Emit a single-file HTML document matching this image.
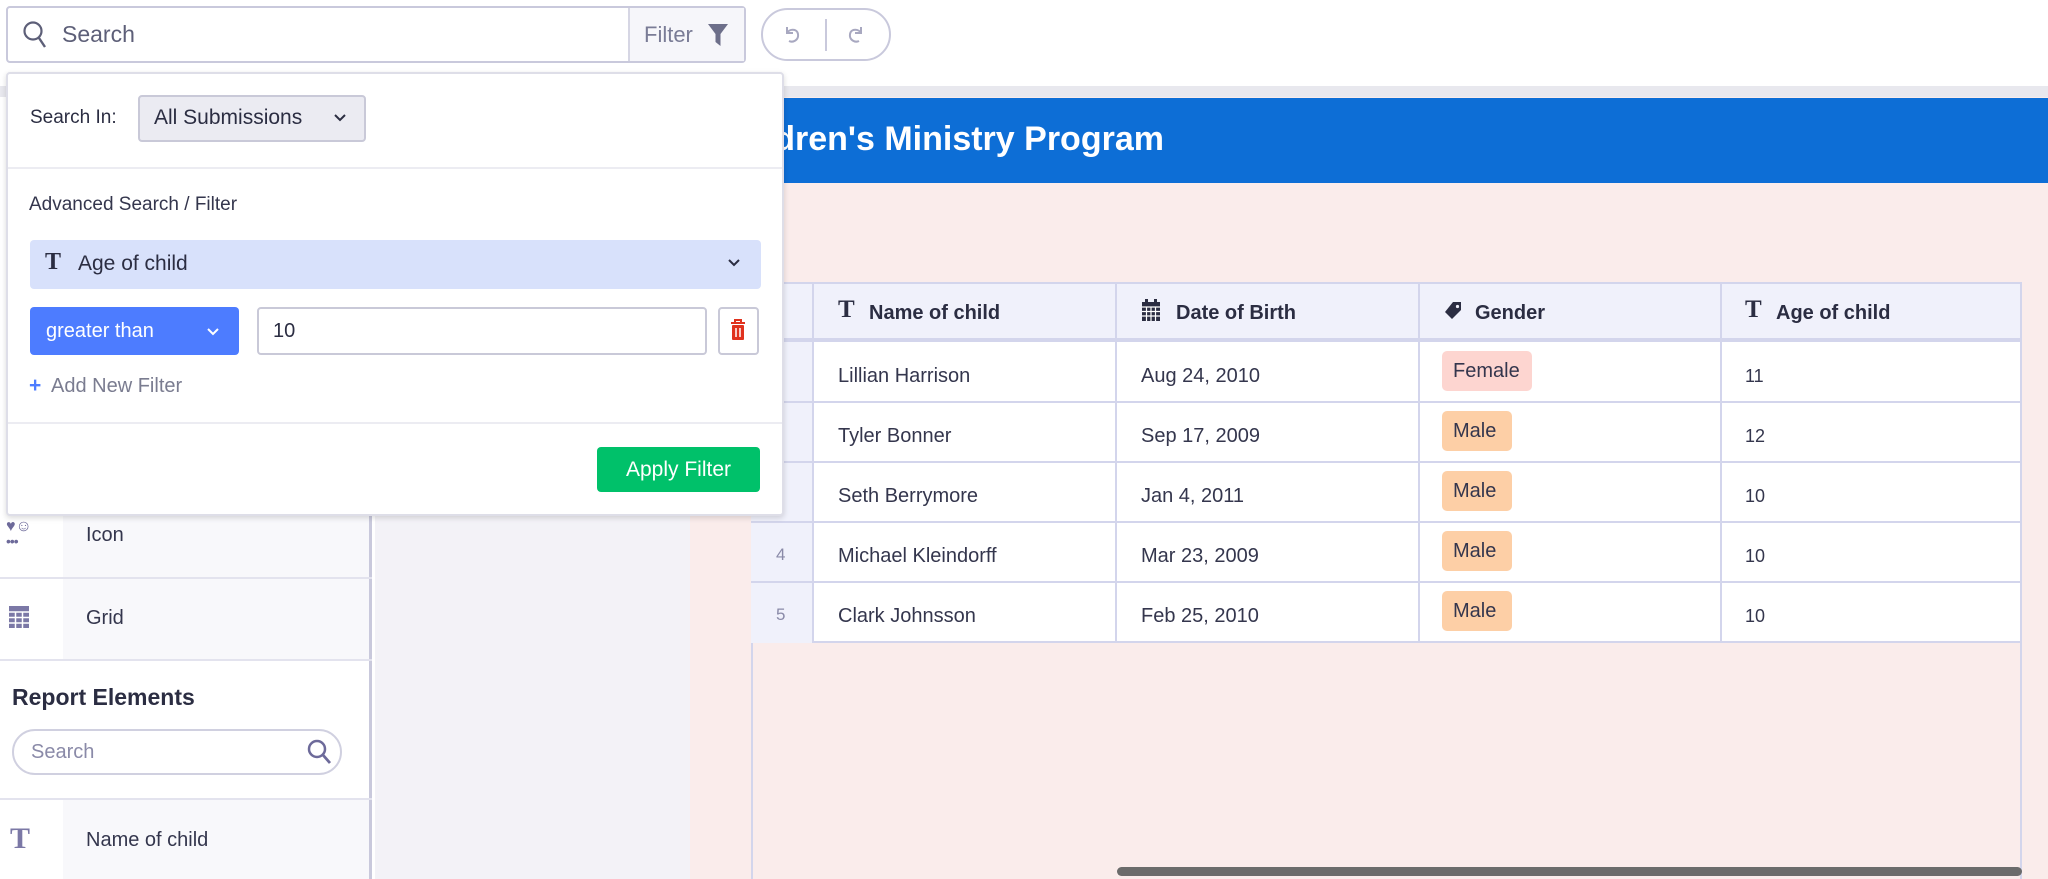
<!DOCTYPE html>
<html><head><meta charset="utf-8"><style>
*{box-sizing:border-box;margin:0;padding:0}
body{width:2048px;height:879px;overflow:hidden;position:relative;background:#fff;font-family:"Liberation Sans",sans-serif;color:#2b2d42}
.a{position:absolute}
.t{font-family:"Liberation Serif",serif;font-weight:bold}
</style></head><body>
<div class="a" style="left:0;top:0;width:2048px;height:86px;background:#fff"></div>
<div class="a" style="left:0;top:86px;width:2048px;height:11px;background:#e8e8ee"></div>
<div class="a" style="left:0;top:97px;width:372px;height:782px;background:#f8f8fb;border-right:3px solid #c9c9dc"></div>
<div class="a" style="left:0;top:97px;width:63px;height:782px;background:#fff"></div>
<div class="a" style="left:0;top:577px;width:372px;height:2px;background:#e3e3ee"></div>
<div class="a" style="left:0;top:659px;width:372px;height:2px;background:#e3e3ee"></div>
<div class="a" style="left:0;top:661px;width:369px;height:138px;background:#fff"></div>
<div class="a" style="left:0;top:798px;width:372px;height:2px;background:#e3e3ee"></div>
<div class="a" style="left:6px;top:520px;color:#6d6a9a;font-size:16px;line-height:14px">♥☺<br><span style="font-size:14px;letter-spacing:-1px">•••</span></div>
<div class="a" style="left:86px;top:524px;font-size:20px;color:#34364d">Icon</div>
<svg class="a" style="left:8px;top:605px" width="22" height="24" viewBox="0 0 22 24"><rect x="1" y="1" width="20" height="22" fill="#7b78a6"/><g stroke="#fff" stroke-width="1.5"><path d="M1 7H21M1 12.5H21M1 18H21M7.5 7V23M14.5 7V23"/></g></svg>
<div class="a" style="left:86px;top:607px;font-size:20px;color:#34364d">Grid</div>
<div class="a" style="left:12px;top:684px;font-size:23px;font-weight:bold;color:#2b2d42">Report Elements</div>
<div class="a" style="left:12px;top:729px;width:330px;height:46px;border:2px solid #d0d0e0;border-radius:23px;background:#fff"></div>
<div class="a" style="left:31px;top:741px;font-size:20px;color:#8a8aa8">Search</div>
<svg class="a" style="left:306px;top:738px" width="26" height="28" viewBox="0 0 26 28"><circle cx="11" cy="11" r="8" fill="none" stroke="#6d6a9a" stroke-width="2.5"/><path d="M17 17L24 25" stroke="#6d6a9a" stroke-width="2.8"/></svg>
<div class="a t" style="left:10px;top:822px;font-size:30px;color:#7b78a6">T</div>
<div class="a" style="left:86px;top:829px;font-size:20px;color:#34364d">Name of child</div>
<div class="a" style="left:375px;top:97px;width:315px;height:782px;background:#f3f2f7"></div>
<div class="a" style="left:690px;top:97px;width:1358px;height:782px;background:#faeceb"></div>
<div class="a" style="left:690px;top:98px;width:1358px;height:85px;background:#0d6ed6"></div>
<div class="a" style="left:710px;top:120px;font-size:34px;font-weight:bold;color:#fff;white-space:nowrap">Children's Ministry Program</div>
<div class="a" style="left:751px;top:282px;width:1271px;height:597px;border:2px solid #d3d5ec;border-bottom:none"></div>
<div class="a" style="left:751px;top:282px;width:1271px;height:361px;background:#fff;border:2px solid #d3d5ec"></div>
<div class="a" style="left:751px;top:282px;width:1271px;height:60px;background:#f0f1fb;border:2px solid #d3d5ec;border-bottom:4px solid #d3d5ec"></div>
<div class="a" style="left:751px;top:342px;width:61px;height:301px;background:#f0f1fb"></div>
<div class="a" style="left:812px;top:282px;width:2px;height:361px;background:#d3d5ec"></div>
<div class="a" style="left:1115px;top:282px;width:2px;height:361px;background:#d3d5ec"></div>
<div class="a" style="left:1418px;top:282px;width:2px;height:361px;background:#d3d5ec"></div>
<div class="a" style="left:1720px;top:282px;width:2px;height:361px;background:#d3d5ec"></div>
<div class="a" style="left:751px;top:401px;width:1271px;height:2px;background:#d3d5ec"></div>
<div class="a" style="left:751px;top:461px;width:1271px;height:2px;background:#d3d5ec"></div>
<div class="a" style="left:751px;top:521px;width:1271px;height:2px;background:#d3d5ec"></div>
<div class="a" style="left:751px;top:581px;width:1271px;height:2px;background:#d3d5ec"></div>
<div class="a t" style="left:838px;top:296px;font-size:25px;color:#2b2d42">T</div>
<div class="a" style="left:869px;top:302px;font-size:20px;font-weight:bold;color:#2b2d42">Name of child</div>
<svg class="a" style="left:1141px;top:298px" width="20" height="24" viewBox="0 0 20 24"><rect x="1" y="4" width="18" height="19" fill="#2b2d42"/><rect x="4" y="1" width="3" height="5" fill="#2b2d42"/><rect x="13" y="1" width="3" height="5" fill="#2b2d42"/><g stroke="#fff" stroke-width="1.2"><path d="M1 9H19M1 13.5H19M1 18H19M5.5 9V23M10 9V23M14.5 9V23"/></g></svg>
<div class="a" style="left:1176px;top:302px;font-size:20px;font-weight:bold;color:#2b2d42">Date of Birth</div>
<svg class="a" style="left:1443px;top:301px" width="20" height="20" viewBox="0 0 20 20"><path d="M10 1H18V9L9 18L2 11Z" fill="#2b2d42"/><circle cx="14.5" cy="5.5" r="1.6" fill="#f0f1fb"/></svg>
<div class="a" style="left:1475px;top:302px;font-size:20px;font-weight:bold;color:#2b2d42">Gender</div>
<div class="a t" style="left:1745px;top:296px;font-size:25px;color:#2b2d42">T</div>
<div class="a" style="left:1776px;top:302px;font-size:20px;font-weight:bold;color:#2b2d42">Age of child</div>
<div class="a" style="left:776px;top:545px;font-size:17px;color:#8a8aa8">4</div>
<div class="a" style="left:776px;top:605px;font-size:17px;color:#8a8aa8">5</div>
<div class="a" style="left:838px;top:364px;font-size:20px;line-height:24px;color:#34364d">Lillian Harrison</div>
<div class="a" style="left:838px;top:424px;font-size:20px;line-height:24px;color:#34364d">Tyler Bonner</div>
<div class="a" style="left:838px;top:484px;font-size:20px;line-height:24px;color:#34364d">Seth Berrymore</div>
<div class="a" style="left:838px;top:544px;font-size:20px;line-height:24px;color:#34364d">Michael Kleindorff</div>
<div class="a" style="left:838px;top:604px;font-size:20px;line-height:24px;color:#34364d">Clark Johnsson</div>
<div class="a" style="left:1141px;top:364px;font-size:20px;line-height:24px;color:#34364d">Aug 24, 2010</div>
<div class="a" style="left:1141px;top:424px;font-size:20px;line-height:24px;color:#34364d">Sep 17, 2009</div>
<div class="a" style="left:1141px;top:484px;font-size:20px;line-height:24px;color:#34364d">Jan 4, 2011</div>
<div class="a" style="left:1141px;top:544px;font-size:20px;line-height:24px;color:#34364d">Mar 23, 2009</div>
<div class="a" style="left:1141px;top:604px;font-size:20px;line-height:24px;color:#34364d">Feb 25, 2010</div>
<div class="a" style="left:1442px;top:351px;width:90px;height:40px;background:#fdd5d0;border-radius:5px;font-size:20px;line-height:40px;padding-left:11px;color:#34364d">Female</div>
<div class="a" style="left:1442px;top:411px;width:70px;height:40px;background:#fdcfa6;border-radius:5px;font-size:20px;line-height:40px;padding-left:11px;color:#34364d">Male</div>
<div class="a" style="left:1442px;top:471px;width:70px;height:40px;background:#fdcfa6;border-radius:5px;font-size:20px;line-height:40px;padding-left:11px;color:#34364d">Male</div>
<div class="a" style="left:1442px;top:531px;width:70px;height:40px;background:#fdcfa6;border-radius:5px;font-size:20px;line-height:40px;padding-left:11px;color:#34364d">Male</div>
<div class="a" style="left:1442px;top:591px;width:70px;height:40px;background:#fdcfa6;border-radius:5px;font-size:20px;line-height:40px;padding-left:11px;color:#34364d">Male</div>
<div class="a" style="left:1745px;top:364px;font-size:18px;line-height:24px;color:#34364d">11</div>
<div class="a" style="left:1745px;top:424px;font-size:18px;line-height:24px;color:#34364d">12</div>
<div class="a" style="left:1745px;top:484px;font-size:18px;line-height:24px;color:#34364d">10</div>
<div class="a" style="left:1745px;top:544px;font-size:18px;line-height:24px;color:#34364d">10</div>
<div class="a" style="left:1745px;top:604px;font-size:18px;line-height:24px;color:#34364d">10</div>
<div class="a" style="left:1117px;top:867px;width:905px;height:9px;background:#6b6b6b;border-radius:5px"></div>
<div class="a" style="left:6px;top:6px;width:740px;height:57px;border:2px solid #c9c9dc;border-radius:4px;background:#fff"></div>
<div class="a" style="left:628px;top:8px;width:116px;height:53px;background:#f6f6fa;border-left:2px solid #d6d6e4"></div>
<svg class="a" style="left:22px;top:20px" width="26" height="30" viewBox="0 0 26 30"><circle cx="11" cy="11" r="8.5" fill="none" stroke="#5d5f78" stroke-width="2.2"/><path d="M17 18L23 27" stroke="#5d5f78" stroke-width="2.4"/></svg>
<div class="a" style="left:62px;top:21px;font-size:23px;color:#5d5f78">Search</div>
<div class="a" style="left:644px;top:22px;font-size:22px;color:#7a7c96">Filter</div>
<svg class="a" style="left:708px;top:24px" width="20" height="22" viewBox="0 0 20 22"><path d="M0 0H20L12.5 10V22L7.5 18V10Z" fill="#6d6f8a"/></svg>
<div class="a" style="left:761px;top:8px;width:130px;height:53px;border:2px solid #c9c9dc;border-radius:27px;background:#fff"></div>
<div class="a" style="left:825px;top:19px;width:2px;height:32px;background:#c9c9dc"></div>
<svg class="a" style="left:782px;top:24px" width="22" height="22" viewBox="0 0 22 22"><path d="M5 3V9H11M5 9C7 5 15 4 16 10C17 16 11 19 7 17" fill="none" stroke="#a8a8c0" stroke-width="2"/></svg>
<svg class="a" style="left:844px;top:24px" width="22" height="22" viewBox="0 0 22 22"><path d="M17 3V9H11M17 9C15 5 7 4 6 10C5 16 11 19 15 17" fill="none" stroke="#a8a8c0" stroke-width="2"/></svg>
<div class="a" style="left:6px;top:72px;width:778px;height:444px;background:#fff;border:2px solid #dedee8;border-radius:4px;box-shadow:0 2px 6px rgba(0,0,0,.15)"></div>
<div class="a" style="left:30px;top:107px;font-size:19px;color:#2b2d42">Search In:</div>
<div class="a" style="left:138px;top:95px;width:228px;height:47px;background:#ebebf2;border:2px solid #c9c9d8;border-radius:4px"></div>
<div class="a" style="left:154px;top:106px;font-size:21px;color:#2b2d42">All Submissions</div>
<svg class="a" style="left:334px;top:114px" width="12" height="8" viewBox="0 0 12 8"><path d="M1 1L6 6L11 1" fill="none" stroke="#2b2d42" stroke-width="2"/></svg>
<div class="a" style="left:8px;top:167px;width:774px;height:2px;background:#ececf2"></div>
<div class="a" style="left:29px;top:194px;font-size:19px;color:#34364d">Advanced Search / Filter</div>
<div class="a" style="left:30px;top:240px;width:731px;height:49px;background:#d8e1fb;border-radius:4px"></div>
<div class="a t" style="left:45px;top:249px;font-size:24px;color:#2b2d42">T</div>
<div class="a" style="left:78px;top:252px;font-size:21px;color:#2b2d42">Age of child</div>
<svg class="a" style="left:728px;top:259px" width="12" height="8" viewBox="0 0 12 8"><path d="M1 1L6 6L11 1" fill="none" stroke="#2b2d42" stroke-width="2"/></svg>
<div class="a" style="left:30px;top:307px;width:209px;height:48px;background:#4d7cff;border-radius:4px"></div>
<div class="a" style="left:46px;top:320px;font-size:20px;color:#fff">greater than</div>
<svg class="a" style="left:207px;top:328px" width="12" height="8" viewBox="0 0 12 8"><path d="M1 1L6 6L11 1" fill="none" stroke="#fff" stroke-width="2"/></svg>
<div class="a" style="left:257px;top:307px;width:450px;height:48px;border:2px solid #c9c9d8;border-radius:4px"></div>
<div class="a" style="left:273px;top:320px;font-size:20px;color:#2b2d42">10</div>
<div class="a" style="left:718px;top:307px;width:41px;height:48px;border:2px solid #c9c9d8;border-radius:4px"></div>
<svg class="a" style="left:730px;top:319px" width="16" height="22" viewBox="0 0 16 22"><path d="M1 4H15M5 4V1H11V4" fill="none" stroke="#e0321e" stroke-width="2"/><rect x="2" y="6" width="12" height="15" rx="1" fill="#e0321e"/><path d="M6 9V18M10 9V18" stroke="#fff" stroke-width="1.5"/></svg>
<div class="a" style="left:29px;top:374px;font-size:21px;color:#4d7cff;font-weight:bold">+</div>
<div class="a" style="left:51px;top:375px;font-size:20px;color:#7a7c90">Add New Filter</div>
<div class="a" style="left:8px;top:422px;width:774px;height:2px;background:#ececf2"></div>
<div class="a" style="left:597px;top:447px;width:163px;height:45px;background:#00c16a;border-radius:4px;color:#fff;font-size:21px;line-height:45px;text-align:center">Apply Filter</div>
</body></html>
